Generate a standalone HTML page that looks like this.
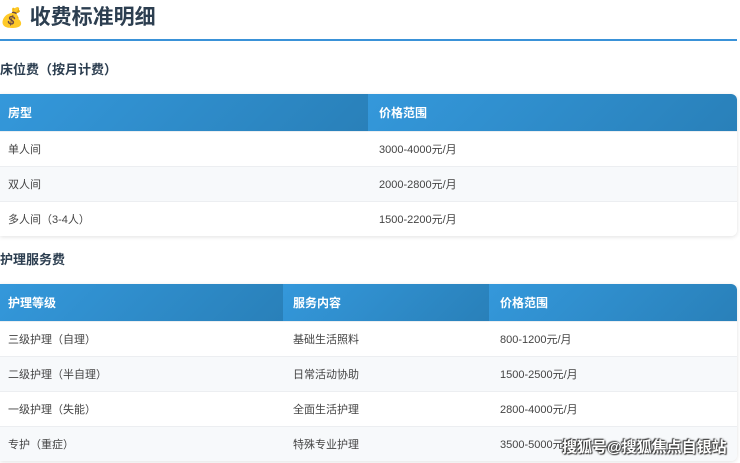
<!DOCTYPE html>
<html><head><meta charset="utf-8"><style>
body{margin:0;width:740px;height:463px;overflow:hidden;background:#fff;font-family:"Liberation Sans","Noto Sans CJK SC",sans-serif;position:relative}
h1{position:absolute;left:0;top:4px;margin:0;font-size:21px;font-weight:bold;color:#2c3e50;line-height:28px;white-space:nowrap}
h1 span{font-size:19px;margin-right:6px}
.line{position:absolute;left:0;top:39px;width:737px;height:2px;background:#3a92d8}
h3{position:absolute;left:0;margin:0;font-size:13px;font-weight:bold;color:#2c3e50;line-height:16px}
table{position:absolute;left:0;width:737px;border-collapse:collapse;box-shadow:0 1px 4px rgba(0,0,0,.12);border-radius:0 6px 6px 0;overflow:hidden;font-size:11px;color:#444}
th{height:37px;padding:0 0 0 8px;text-align:left;color:#fff;font-size:12px;background:linear-gradient(135deg,#3498db,#2980b9)}
td{height:34px;padding:0 0 0 8px;border-top:1px solid #eceef1}
tr:nth-child(odd) td{background:#f7f9fb}
tr:nth-child(even) td{background:#fff}
.wm{position:absolute;left:562px;top:436px;font-size:15px;font-weight:bold;color:#fff;text-shadow:0 0 2px #333,1px 1px 1px #333,-1px -1px 1px #333;white-space:nowrap}
</style></head><body>
<h1><span>💰</span>收费标准明细</h1>
<div class="line"></div>
<h3 style="top:62px">床位费（按月计费）</h3>
<table style="top:94px">
<tr><th style="width:360px">房型</th><th style="padding-left:11px">价格范围</th></tr>
<tr><td>单人间</td><td style="padding-left:11px">3000-4000元/月</td></tr>
<tr><td>双人间</td><td style="padding-left:11px">2000-2800元/月</td></tr>
<tr><td>多人间（3-4人）</td><td style="padding-left:11px">1500-2200元/月</td></tr>
</table>
<h3 style="top:252px">护理服务费</h3>
<table style="top:284px">
<tr><th style="width:275px">护理等级</th><th style="width:196px;padding-left:10px">服务内容</th><th style="padding-left:11px">价格范围</th></tr>
<tr><td>三级护理（自理）</td><td style="padding-left:10px">基础生活照料</td><td style="padding-left:11px">800-1200元/月</td></tr>
<tr><td>二级护理（半自理）</td><td style="padding-left:10px">日常活动协助</td><td style="padding-left:11px">1500-2500元/月</td></tr>
<tr><td>一级护理（失能）</td><td style="padding-left:10px">全面生活护理</td><td style="padding-left:11px">2800-4000元/月</td></tr>
<tr><td>专护（重症）</td><td style="padding-left:10px">特殊专业护理</td><td style="padding-left:11px">3500-5000元/月</td></tr>
</table>
<div class="wm">搜狐号@搜狐焦点自银站</div>
</body></html>
